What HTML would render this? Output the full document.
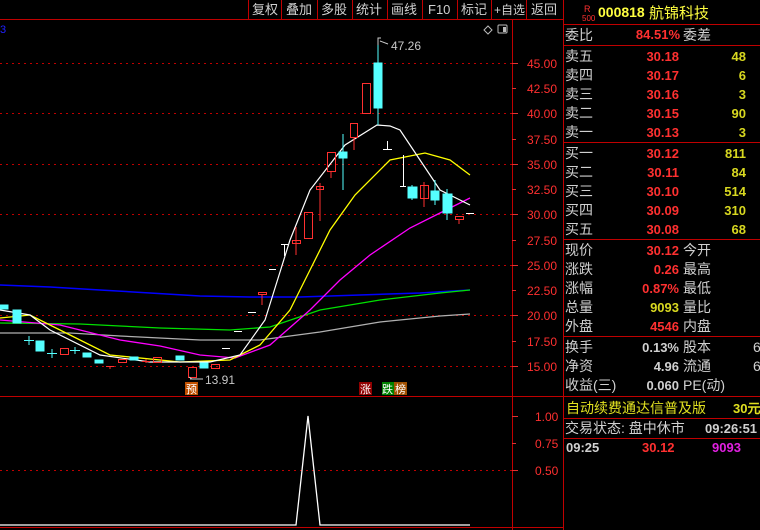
<!DOCTYPE html>
<html><head><meta charset="utf-8"><style>
*{margin:0;padding:0}
body{width:760px;height:530px;background:#000;overflow:hidden;position:relative;font-family:"Liberation Sans","WenQuanYi Zen Hei",sans-serif}
svg{position:absolute;left:0;top:0}
text{font-family:"Liberation Sans","WenQuanYi Zen Hei",sans-serif}
</style></head><body>
<svg width="760" height="530" viewBox="0 0 760 530" xmlns="http://www.w3.org/2000/svg">
<!-- frame lines -->
<g stroke="#c00000" stroke-width="1" fill="none">
<line x1="0" y1="19.5" x2="563" y2="19.5"/>
<line x1="512.5" y1="19" x2="512.5" y2="530"/>
<line x1="563.5" y1="0" x2="563.5" y2="530"/>
<line x1="0" y1="396.5" x2="563" y2="396.5"/>
<line x1="0" y1="527.5" x2="563" y2="527.5"/>
<line x1="248.5" y1="0" x2="248.5" y2="19"/><line x1="281.5" y1="0" x2="281.5" y2="19"/>
<line x1="317.5" y1="0" x2="317.5" y2="19"/><line x1="352.5" y1="0" x2="352.5" y2="19"/>
<line x1="387.5" y1="0" x2="387.5" y2="19"/><line x1="422.5" y1="0" x2="422.5" y2="19"/>
<line x1="457.5" y1="0" x2="457.5" y2="19"/><line x1="491.5" y1="0" x2="491.5" y2="19"/>
<line x1="526.5" y1="0" x2="526.5" y2="19"/>
<!-- right panel lines -->
<line x1="563" y1="24.5" x2="760" y2="24.5"/>
<line x1="563" y1="45.5" x2="760" y2="45.5"/>
<line x1="563" y1="142.5" x2="760" y2="142.5"/>
<line x1="563" y1="239.5" x2="760" y2="239.5"/>
<line x1="563" y1="336.5" x2="760" y2="336.5"/>
<line x1="563" y1="396.5" x2="760" y2="396.5"/>
<line x1="563" y1="418.5" x2="760" y2="418.5"/>
<line x1="563" y1="438.5" x2="760" y2="438.5"/>
</g>
<!-- toolbar text -->
<g fill="#d0d0d0" font-size="13">
<text x="252" y="14">复权</text><text x="286" y="14">叠加</text><text x="321" y="14">多股</text>
<text x="356" y="14">统计</text><text x="391" y="14">画线</text><text x="428" y="14">F10</text>
<text x="461" y="14">标记</text><text x="494" y="14" font-size="12">+自选</text><text x="531" y="14">返回</text>
</g>
<path d="M484 30 l4 -4 l4 4 l-4 4z" stroke="#bbb" fill="none"/>
<rect x="498" y="25" width="9" height="8" rx="1" stroke="#bbb" fill="none"/><rect x="503" y="27" width="3" height="5" fill="#bbb"/>
<text x="0" y="33" fill="#2020ff" font-size="11">3</text>
<!-- grid -->
<g stroke="#c00000" stroke-dasharray="2,4">
<line x1="0" y1="63.5" x2="512" y2="63.5"/><line x1="0" y1="113.5" x2="512" y2="113.5"/>
<line x1="0" y1="164.5" x2="512" y2="164.5"/><line x1="0" y1="214.5" x2="512" y2="214.5"/>
<line x1="0" y1="265.5" x2="512" y2="265.5"/><line x1="0" y1="315.5" x2="512" y2="315.5"/>
<line x1="0" y1="366.5" x2="512" y2="366.5"/><line x1="0" y1="470.5" x2="512" y2="470.5"/>
</g>
<!-- axis ticks & labels -->
<g stroke="#e03030">
<line x1="512" y1="63.5" x2="518" y2="63.5"/><line x1="512" y1="88.5" x2="516" y2="88.5"/>
<line x1="512" y1="113.5" x2="518" y2="113.5"/><line x1="512" y1="139.5" x2="516" y2="139.5"/>
<line x1="512" y1="164.5" x2="518" y2="164.5"/><line x1="512" y1="189.5" x2="516" y2="189.5"/>
<line x1="512" y1="214.5" x2="518" y2="214.5"/><line x1="512" y1="240.5" x2="516" y2="240.5"/>
<line x1="512" y1="265.5" x2="518" y2="265.5"/><line x1="512" y1="290.5" x2="516" y2="290.5"/>
<line x1="512" y1="315.5" x2="518" y2="315.5"/><line x1="512" y1="341.5" x2="516" y2="341.5"/>
<line x1="512" y1="366.5" x2="518" y2="366.5"/>
<line x1="512" y1="416.5" x2="518" y2="416.5"/><line x1="512" y1="443.5" x2="516" y2="443.5"/><line x1="512" y1="470.5" x2="518" y2="470.5"/>
</g>
<g fill="#ff3030" font-size="12">
<text x="527" y="68">45.00</text><text x="527" y="93">42.50</text><text x="527" y="118">40.00</text>
<text x="527" y="144">37.50</text><text x="527" y="169">35.00</text><text x="527" y="194">32.50</text>
<text x="527" y="219">30.00</text><text x="527" y="245">27.50</text><text x="527" y="270">25.00</text>
<text x="527" y="295">22.50</text><text x="527" y="320">20.00</text><text x="527" y="346">17.50</text>
<text x="527" y="371">15.00</text>
<text x="535" y="421">1.00</text><text x="535" y="448">0.75</text><text x="535" y="475">0.50</text>
</g>
<!-- MA lines -->
<g fill="none" stroke-width="1">
<polyline stroke="#0000ff" stroke-width="1.5" points="0,285 50,287 100,290 150,293 200,296 250,297 300,297 360,295 420,293 470,290"/>
<polyline stroke="#00e000" stroke-width="1.3" points="0,323 80,324 120,326 160,328 230,330 270,327 320,310 380,300 440,293 470,290"/>
<polyline stroke="#b0b0b0" stroke-width="1.3" points="0,333 70,333 120,336 200,340 260,340 320,332 380,322 440,316 470,314"/>
<polyline stroke="#ff00ff" stroke-width="1.3" points="0,320 60,325 120,340 160,346 200,355 235,358 270,345 310,310 340,280 370,255 410,228 440,213 470,198"/>
<polyline stroke="#ffff00" stroke-width="1.3" points="0,318 30,315 60,330 110,355 180,362 230,360 260,345 290,310 310,270 330,230 355,195 390,160 425,153 450,160 470,175"/>
<polyline stroke="#ffffff" stroke-width="1.2" points="0,310 30,315 50,330 100,355 150,362 210,362 240,355 265,320 290,240 310,190 345,145 377,125 390,126 400,130 420,160 440,190 470,205"/>
</g>
<!-- candles -->
<g fill="#55ffff" stroke="#55ffff">
<rect x="0" y="305" width="8" height="4"/><rect x="13" y="310" width="8" height="13"/>
<line x1="24" y1="340.5" x2="34" y2="340.5"/><line x1="29" y1="336" x2="29" y2="345"/>
<rect x="36" y="341" width="8" height="10"/>
<line x1="47" y1="353.5" x2="57" y2="353.5"/><line x1="52" y1="349" x2="52" y2="358"/>
<line x1="70" y1="350.5" x2="80" y2="350.5"/><line x1="75" y1="347" x2="75" y2="354"/>
<rect x="83" y="353" width="8" height="4"/><rect x="95" y="360" width="8" height="3"/>
<rect x="130" y="357" width="8" height="3"/><rect x="176" y="356" width="8" height="4"/>
<rect x="200" y="363" width="8" height="5"/>
<rect x="339" y="152" width="8" height="6"/><line x1="343" y1="134" x2="343" y2="190"/>
<rect x="374" y="63" width="8" height="45"/><line x1="378" y1="40" x2="378" y2="125"/>
<rect x="408" y="187" width="9" height="11"/><line x1="412" y1="185" x2="412" y2="200"/>
<rect x="431" y="191" width="8" height="9"/><line x1="435" y1="180" x2="435" y2="205"/>
<rect x="443" y="194" width="9" height="19"/><line x1="447" y1="189" x2="447" y2="220"/>
</g>
<g fill="none" stroke="#ff3030">
<rect x="60.5" y="348.5" width="8" height="6"/><line x1="106" y1="366.5" x2="114" y2="366.5"/><line x1="110" y1="366" x2="110" y2="369"/>
<rect x="118.5" y="359.5" width="8" height="3"/><line x1="142" y1="361.5" x2="150" y2="361.5"/><line x1="146" y1="359" x2="146" y2="363"/>
<rect x="153.5" y="357.5" width="8" height="5"/><rect x="188.5" y="367.5" width="8" height="10"/>
<rect x="211.5" y="364.5" width="8" height="4"/>
<rect x="258.5" y="292.5" width="8" height="2"/><line x1="262" y1="294" x2="262" y2="305"/>
<rect x="292.5" y="240.5" width="8" height="3"/><line x1="296" y1="227" x2="296" y2="255"/>
<rect x="304.5" y="212.5" width="8" height="26"/>
<rect x="316.5" y="186.5" width="7" height="3"/><line x1="320" y1="183" x2="320" y2="221"/>
<rect x="327.5" y="152.5" width="8" height="19"/><line x1="331" y1="171" x2="331" y2="178"/>
<rect x="350.5" y="123.5" width="7" height="14"/><line x1="354" y1="138" x2="354" y2="150"/>
<rect x="362.5" y="83.5" width="8" height="30"/>
<rect x="420.5" y="185.5" width="8" height="13"/><line x1="424" y1="182" x2="424" y2="207"/>
<rect x="455.5" y="216.5" width="8" height="3"/><line x1="459" y1="219" x2="459" y2="224"/>
</g>
<g stroke="#ffffff">
<line x1="222" y1="348.5" x2="230" y2="348.5"/><line x1="234" y1="331.5" x2="242" y2="331.5"/>
<line x1="248" y1="312.5" x2="256" y2="312.5"/><line x1="269" y1="269.5" x2="276" y2="269.5"/>
<line x1="281" y1="244.5" x2="288" y2="244.5"/><line x1="284.5" y1="244" x2="284.5" y2="256"/>
<line x1="383" y1="149.5" x2="392" y2="149.5"/><line x1="387.5" y1="141" x2="387.5" y2="149"/>
<line x1="400" y1="186.5" x2="406" y2="186.5"/><line x1="403.5" y1="155" x2="403.5" y2="186"/>
<line x1="466" y1="213.5" x2="474" y2="213.5"/>
</g>
<!-- annotations -->
<path d="M378 45 l0 -7 l3 0 M380 41 l8 3" stroke="#ccc" fill="none"/>
<text x="391" y="50" fill="#c8c8c8" font-size="12">47.26</text>
<path d="M193 378 l0 -0 M192 379 l-3 -2 M190 379 l13 0" stroke="#ccc" fill="none"/>
<text x="205" y="384" fill="#c8c8c8" font-size="12">13.91</text>
<rect x="185" y="382" width="13" height="13" fill="#c05000"/><text x="186" y="393" fill="#fff" font-size="11">预</text>
<rect x="359" y="382" width="13" height="13" fill="#900000"/><text x="360" y="393" fill="#fff" font-size="11">涨</text>
<rect x="382" y="382" width="12" height="13" fill="#008000"/><text x="382" y="393" fill="#fff" font-size="11">跌</text>
<rect x="394" y="382" width="13" height="13" fill="#a05000"/><text x="395" y="393" fill="#fff" font-size="11">榜</text>
<!-- lower indicator -->
<polyline fill="none" stroke="#fff" stroke-width="1.3" points="0,525 296,525 308,416 320,525 470,525"/>
<!-- right panel -->
<text x="584" y="12" fill="#ff3030" font-size="9">R</text><text x="582" y="21" fill="#ff3030" font-size="8">500</text>
<text x="598" y="17" fill="#ffff40" font-size="14" font-weight="bold">000818</text>
<text x="649" y="18" fill="#ffff40" font-size="15">航锦科技</text>
<g fill="#d0d0d0" font-size="14">
<text x="565" y="40">委比</text><text x="683" y="40">委差</text>
<text x="565" y="61">卖五</text><text x="565" y="80">卖四</text><text x="565" y="99">卖三</text><text x="565" y="118">卖二</text><text x="565" y="137">卖一</text>
<text x="565" y="158">买一</text><text x="565" y="177">买二</text><text x="565" y="196">买三</text><text x="565" y="215">买四</text><text x="565" y="234">买五</text>
<text x="565" y="255">现价</text><text x="683" y="255">今开</text>
<text x="565" y="274">涨跌</text><text x="683" y="274">最高</text>
<text x="565" y="293">涨幅</text><text x="683" y="293">最低</text>
<text x="565" y="312">总量</text><text x="683" y="312">量比</text>
<text x="565" y="331">外盘</text><text x="683" y="331">内盘</text>
<text x="565" y="352">换手</text><text x="683" y="352">股本</text>
<text x="565" y="371">净资</text><text x="683" y="371">流通</text>
<text x="565" y="390">收益(三)</text><text x="683" y="390">PE(动)</text>
<text x="753" y="352">6</text><text x="753" y="371">6</text>
<text x="565" y="433">交易状态: 盘中休市</text>
</g>
<g font-size="13" font-weight="bold" text-anchor="end">
<g fill="#ff3030">
<text x="680" y="39">84.51%</text>
<text x="679" y="61">30.18</text><text x="679" y="80">30.17</text><text x="679" y="99">30.16</text><text x="679" y="118">30.15</text><text x="679" y="137">30.13</text>
<text x="679" y="158">30.12</text><text x="679" y="177">30.11</text><text x="679" y="196">30.10</text><text x="679" y="215">30.09</text><text x="679" y="234">30.08</text>
<text x="679" y="255">30.12</text><text x="679" y="274">0.26</text><text x="679" y="293">0.87%</text><text x="679" y="331">4546</text>
</g>
<g fill="#d8d820">
<text x="746" y="61">48</text><text x="746" y="80">6</text><text x="746" y="99">3</text><text x="746" y="118">90</text><text x="746" y="137">3</text>
<text x="746" y="158">811</text><text x="746" y="177">84</text><text x="746" y="196">514</text><text x="746" y="215">310</text><text x="746" y="234">68</text>
<text x="679" y="312">9093</text>
</g>
<g fill="#d0d0d0"><text x="679" y="352">0.13%</text><text x="679" y="371">4.96</text><text x="679" y="390">0.060</text></g>
</g>
<text x="566" y="413" fill="#e0e020" font-size="14">自动续费通达信普及版</text>
<text x="733" y="413" fill="#e0e020" font-size="13" font-weight="bold">30元</text>
<text x="705" y="433" fill="#d0d0d0" font-size="13" font-weight="bold">09:26:51</text>
<text x="566" y="452" fill="#d0d0d0" font-size="13" font-weight="bold">09:25</text>
<text x="642" y="452" fill="#ff3030" font-size="13" font-weight="bold">30.12</text>
<text x="712" y="452" fill="#e020e0" font-size="13" font-weight="bold">9093</text>
</svg>
</body></html>
